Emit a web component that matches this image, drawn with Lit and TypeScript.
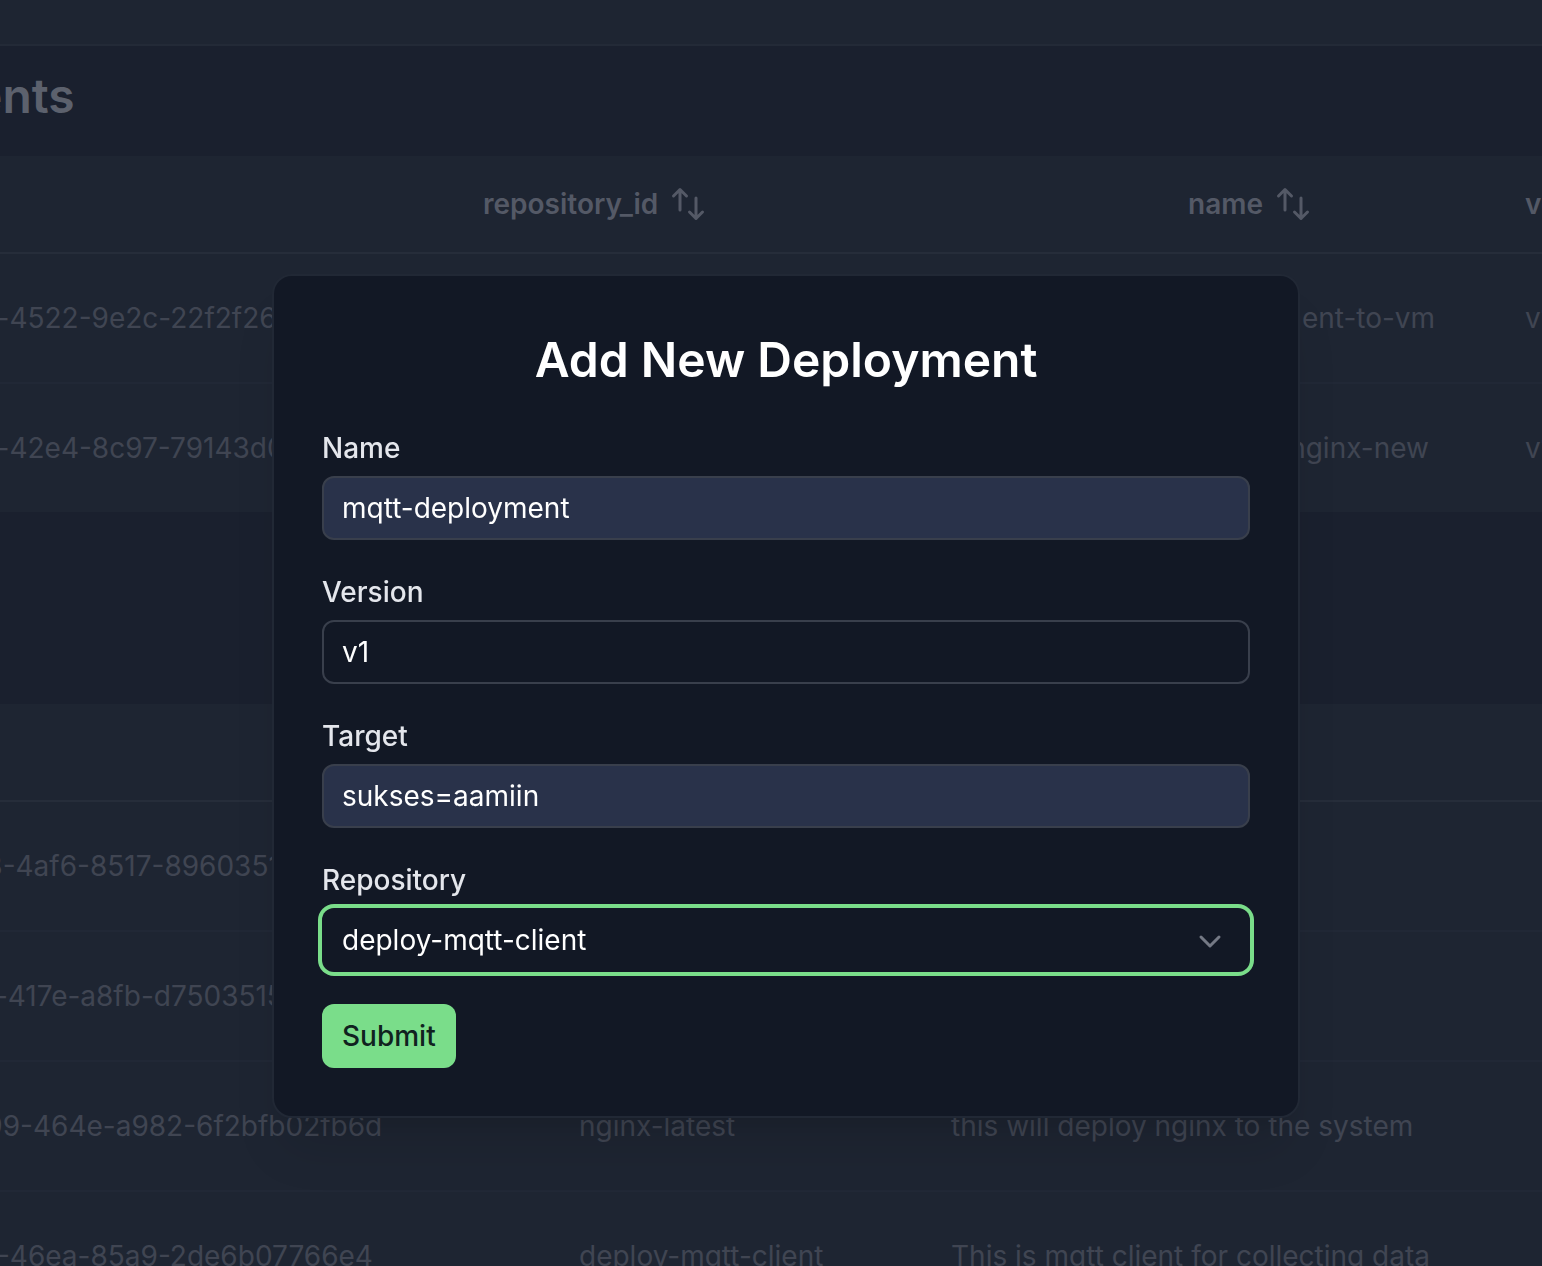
import { LitElement, html, css, svg } from "lit";
import { customElement, state } from "lit/decorators.js";

interface Deployment {
  id: string;
  name: string;
  version: string;
}

interface Repository {
  id: string;
  name: string;
  description: string;
}

const deployments: Deployment[] = [
  { id: "1d-4522-9e2c-22f2f26", name: "deployment-to-vm", version: "v1" },
  { id: "1d-42e4-8c97-79143d0", name: "deploy-nginx-new", version: "v1" },
];

const repositories: Repository[] = [
  { id: "88-4af6-8517-8960351", name: "", description: "" },
  { id: "8f-417e-a8fb-d7503515", name: "", description: "" },
  { id: "899-464e-a982-6f2bfb02fb6d", name: "nginx-latest", description: "this will deploy nginx to the system" },
  { id: "41-46ea-85a9-2de6b07766e4", name: "deploy-mqtt-client", description: "This is mqtt client for collecting data" },
];

const sortIcon = html`<svg class="sort" viewBox="0 0 36 36" aria-hidden="true">
  ${svg`<path d="M10 24V4M3.5 10L10 3.5L16.500 10M26 12V32.500M19.500 26L26 32.500L32.500 26" />`}
</svg>`;

@customElement("app-root")
export class AppRoot extends LitElement {
  static styles = css`
    :host {
      display: block;
      height: 100vh;
      overflow: hidden;
      background: #1a202e;
      color: #404552;
      font: 400 28px/40px Inter, "Liberation Sans", sans-serif;
    }
    * {
      box-sizing: border-box;
    }
    .topbar {
      height: 46px;
      background: #1e2532;
      border-bottom: 2px solid #232a37;
    }
    .page-title {
      margin: 0 0 0 -26px;
      height: 110px;
      padding-top: 20px;
      font-size: 48px;
      line-height: 60px;
      font-weight: 600;
      color: #5c616d;
    }
    .data {
      table-layout: fixed;
      width: calc(100% + 32px);
      margin: 0 0 192px -32px;
      border-collapse: separate;
      border-spacing: 0;
      background: #1e2532;
      white-space: nowrap;
    }
    .data th,
    .data td {
      padding: 0;
      text-align: left;
    }
    .data td {
      height: 130px;
      border-bottom: 2px solid #212836;
    }
    .data tr:last-child td {
      height: 128px;
      border-bottom: 0;
    }
    .data th {
      height: 98px;
      border-bottom: 2px solid #262d3a;
      color: #545966;
      font-weight: 600;
    }
    .id-col {
      width: 515px;
    }
    .repo-id-col {
      width: 705px;
    }
    .name-col {
      width: 337px;
    }
    .repo-col {
      width: 611px;
    }
    .repo-name-col {
      width: 372px;
    }
    .head {
      display: flex;
      align-items: center;
      gap: 12px;
    }
    .sort {
      width: 36px;
      height: 36px;
      flex: none;
      fill: none;
      stroke: currentColor;
      stroke-width: 3;
      stroke-linecap: round;
      stroke-linejoin: round;
    }
    .overlay {
      position: fixed;
      inset: 0;
      padding: 274px 242px 32px 272px;
    }
    .dialog {
      padding: 48px;
      border: 2px solid #212835;
      border-radius: 20px;
      background: #121825;
      box-shadow: 0 40px 50px -10px rgb(0 0 0 / 0.1), 0 16px 20px -12px rgb(0 0 0 / 0.1);
    }
    .dialog-title {
      margin: 0 0 32px;
      text-align: center;
      font-size: 48px;
      line-height: 72px;
      font-weight: 600;
      color: #fff;
    }
    .form {
      display: flex;
      flex-direction: column;
      align-items: stretch;
      gap: 32px;
    }
    .field {
      display: grid;
      gap: 8px;
    }
    .label {
      font-weight: 500;
      color: #e4e6ec;
    }
    .control {
      width: 100%;
      height: 64px;
      margin: 0;
      padding: 0 18px;
      border: 2px solid #393f4c;
      border-radius: 12px;
      outline: none;
      background: transparent;
      color: #fff;
      font: inherit;
    }
    .filled {
      background: #29324a;
    }
    .picker {
      display: grid;
      align-items: center;
    }
    .picker > * {
      grid-area: 1 / 1;
    }
    .select {
      appearance: none;
      border-color: transparent;
      box-shadow: 0 0 0 4px #7add8a;
    }
    .chevron {
      justify-self: end;
      width: 24px;
      height: 24px;
      margin-right: 28px;
      fill: none;
      stroke: #747985;
      stroke-width: 3;
      stroke-linecap: round;
      stroke-linejoin: round;
      pointer-events: none;
    }
    .submit {
      align-self: flex-start;
      height: 64px;
      padding: 0 20px;
      border: 0;
      border-radius: 12px;
      background: #7add8a;
      color: #10221f;
      font: inherit;
      font-weight: 500;
    }
  `;

  @state() private name = "mqtt-deployment";
  @state() private version = "v1";
  @state() private target = "sukses=aamiin";

  private submit(event: Event) {
    event.preventDefault();
  }

  private textField(id: string, label: string, value: string, filled: boolean) {
    return html`<div class="field">
      <label class="label" for=${id}>${label}</label>
      <input class="control ${filled ? "filled" : ""}" id=${id} type="text" .value=${value} />
    </div>`;
  }

  render() {
    return html`
      <header class="topbar"></header>
      <main>
        <h1 class="page-title">ents</h1>
        <table class="data">
          <thead>
            <tr>
              <th class="id-col"></th>
              <th class="repo-id-col"><div class="head">repository_id ${sortIcon}</div></th>
              <th class="name-col"><div class="head">name ${sortIcon}</div></th>
              <th>version</th>
            </tr>
          </thead>
          <tbody>
            ${deployments.map(
              (row) => html`<tr>
                <td>${row.id}</td>
                <td></td>
                <td>${row.name}</td>
                <td>${row.version}</td>
              </tr>`
            )}
          </tbody>
        </table>
        <table class="data">
          <thead>
            <tr>
              <th class="repo-col"></th>
              <th class="repo-name-col"></th>
              <th></th>
            </tr>
          </thead>
          <tbody>
            ${repositories.map(
              (row) => html`<tr>
                <td>${row.id}</td>
                <td>${row.name}</td>
                <td>${row.description}</td>
              </tr>`
            )}
          </tbody>
        </table>
      </main>
      <div class="overlay">
        <section class="dialog" role="dialog" aria-modal="true" aria-labelledby="dialog-title">
          <h2 class="dialog-title" id="dialog-title">Add New Deployment</h2>
          <form class="form" @submit=${this.submit}>
            ${this.textField("name", "Name", this.name, true)}
            ${this.textField("version", "Version", this.version, false)}
            ${this.textField("target", "Target", this.target, true)}
            <div class="field">
              <label class="label" for="repository">Repository</label>
              <div class="picker">
                <select class="control select" id="repository">
                  <option>deploy-mqtt-client</option>
                </select>
                <svg class="chevron" viewBox="0 0 24 24" aria-hidden="true">
                  <path d="M3 9L12 18L21 9" />
                </svg>
              </div>
            </div>
            <button class="submit" type="submit">Submit</button>
          </form>
        </section>
      </div>
    `;
  }
}
